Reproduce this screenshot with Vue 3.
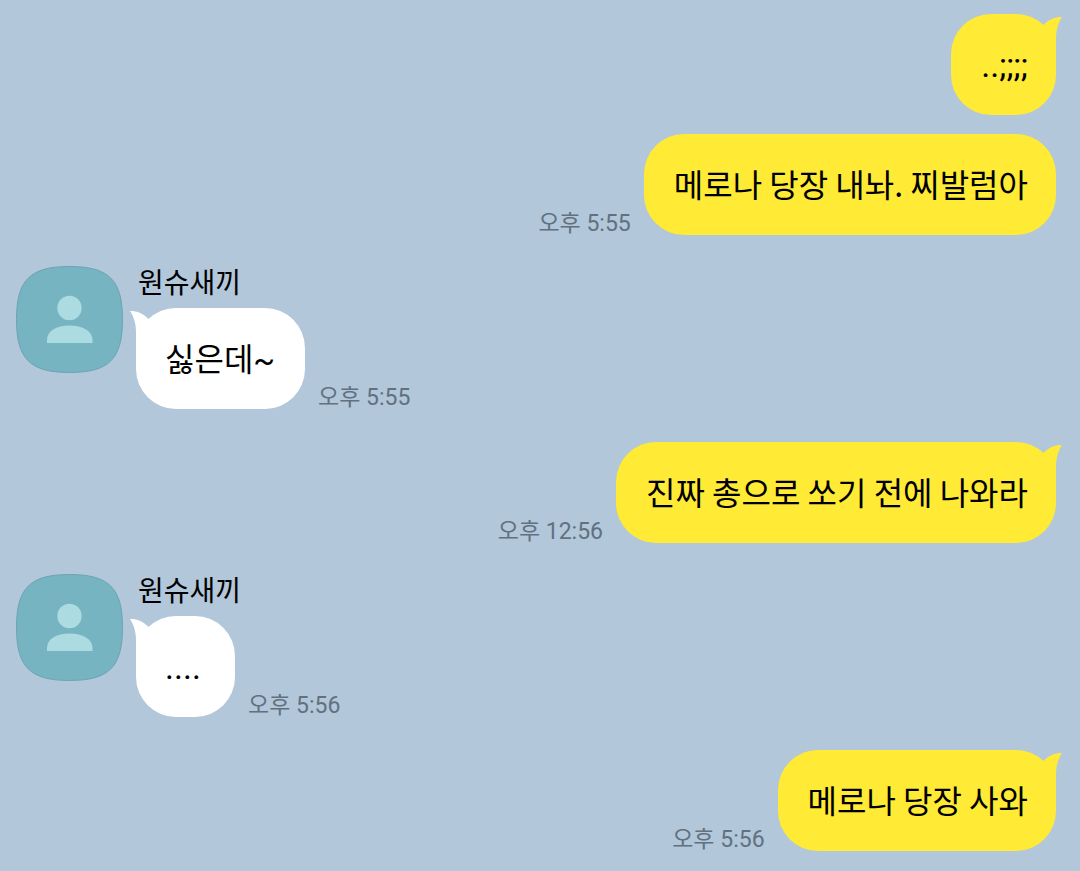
<script setup>
const groups = [
  { mine: true, messages: [
    { text: '..;;;;', tail: true, symbols: true },
    { text: '메로나 당장 내놔. 찌발럼아', time: '오후 5:55' },
  ] },
  { name: '원슈새끼', messages: [{ text: '싫은데~', tail: true, time: '오후 5:55' }] },
  { mine: true, messages: [{ text: '진짜 총으로 쏘기 전에 나와라', tail: true, time: '오후 12:56' }] },
  { name: '원슈새끼', messages: [{ text: '....', tail: true, symbols: true, time: '오후 5:56' }] },
  { mine: true, messages: [{ text: '메로나 당장 사와', tail: true, time: '오후 5:56' }] },
]
</script>

<template>
  <main class="chat">
    <section v-for="(group, g) in groups" :key="g" class="group" :class="group.mine ? 'mine' : 'theirs'">
      <svg v-if="group.name" class="avatar" viewBox="0 0 107 107" aria-hidden="true">
        <path d="M.5 53.5C.5 14 14 .5 53.5 .5S106.5 14 106.5 53.5 93 106.5 53.5 106.5 .5 93 .5 53.5Z" fill="#75b4c0" stroke="#6ea3b4" />
        <circle cx="53.5" cy="42" r="12.2" fill="#acdbe1" />
        <path d="M31 77V74C31 65 40 59.5 53.5 59.5S76.5 65 76.5 74V77Z" fill="#acdbe1" />
      </svg>
      <div class="stack">
        <h2 v-if="group.name" class="name">{{ group.name }}</h2>
        <div v-for="(message, m) in group.messages" :key="m" class="row">
          <p class="bubble" :class="{ symbols: message.symbols }">
            <svg v-if="message.tail" class="tail" viewBox="0 0 36 40" aria-hidden="true">
              <path d="M10 12L18 10.5C23 5.5 28 3 36 3C32 9 30 16 30 25V40H10Z" />
            </svg>
            {{ message.text }}
          </p>
          <time v-if="message.time" class="time">{{ message.time }}</time>
        </div>
      </div>
    </section>
  </main>
</template>

<style>
body {
  margin: 0;
  background: #b2c7da;
}
</style>

<style scoped>
.chat {
  display: flex;
  flex-direction: column;
  gap: 31px;
  padding: 14px 24px 20px 16px;
  font-family: Roboto, "Noto Sans CJK KR", sans-serif;
  color: #000;
}
.group {
  display: flex;
  gap: 13px;
}
.theirs {
  padding-bottom: 2px;
}
.avatar {
  flex: none;
  width: 107px;
  height: 107px;
}
.stack {
  display: flex;
  flex: 1;
  flex-direction: column;
  gap: 19px;
}
.theirs .stack {
  gap: 6px;
}
.name {
  margin: 0;
  padding-left: 2px;
  font-size: 28px;
  font-weight: 400;
  line-height: 36px;
}
.row {
  display: flex;
  align-items: flex-end;
  gap: 13px;
}
.mine .row {
  flex-direction: row-reverse;
}
.bubble {
  position: relative;
  box-sizing: border-box;
  min-width: 99px;
  min-height: 101px;
  margin: 0;
  padding: 30px 30px 27px 29px;
  border-radius: 40px;
  background: #fff;
  font-size: 32px;
  line-height: 44px;
}
.mine .bubble {
  padding-right: 28px;
  padding-left: 30px;
  background: #ffea35;
}
.mine .bubble:not(.symbols) {
  padding-top: 27px;
  padding-bottom: 30px;
  font-family: "Noto Sans CJK KR", sans-serif;
}
.bubble.symbols {
  padding-top: 29px;
  padding-bottom: 28px;
  font-size: 34px;
}
.tail {
  position: absolute;
  top: 0;
  left: -6px;
  width: 36px;
  height: 40px;
  fill: #fff;
  transform: scaleX(-1);
}
.mine .tail {
  right: -6px;
  left: auto;
  fill: #ffea35;
  transform: none;
}
.time {
  font-size: 23px;
  line-height: 22px;
  color: #61717f;
}
</style>
